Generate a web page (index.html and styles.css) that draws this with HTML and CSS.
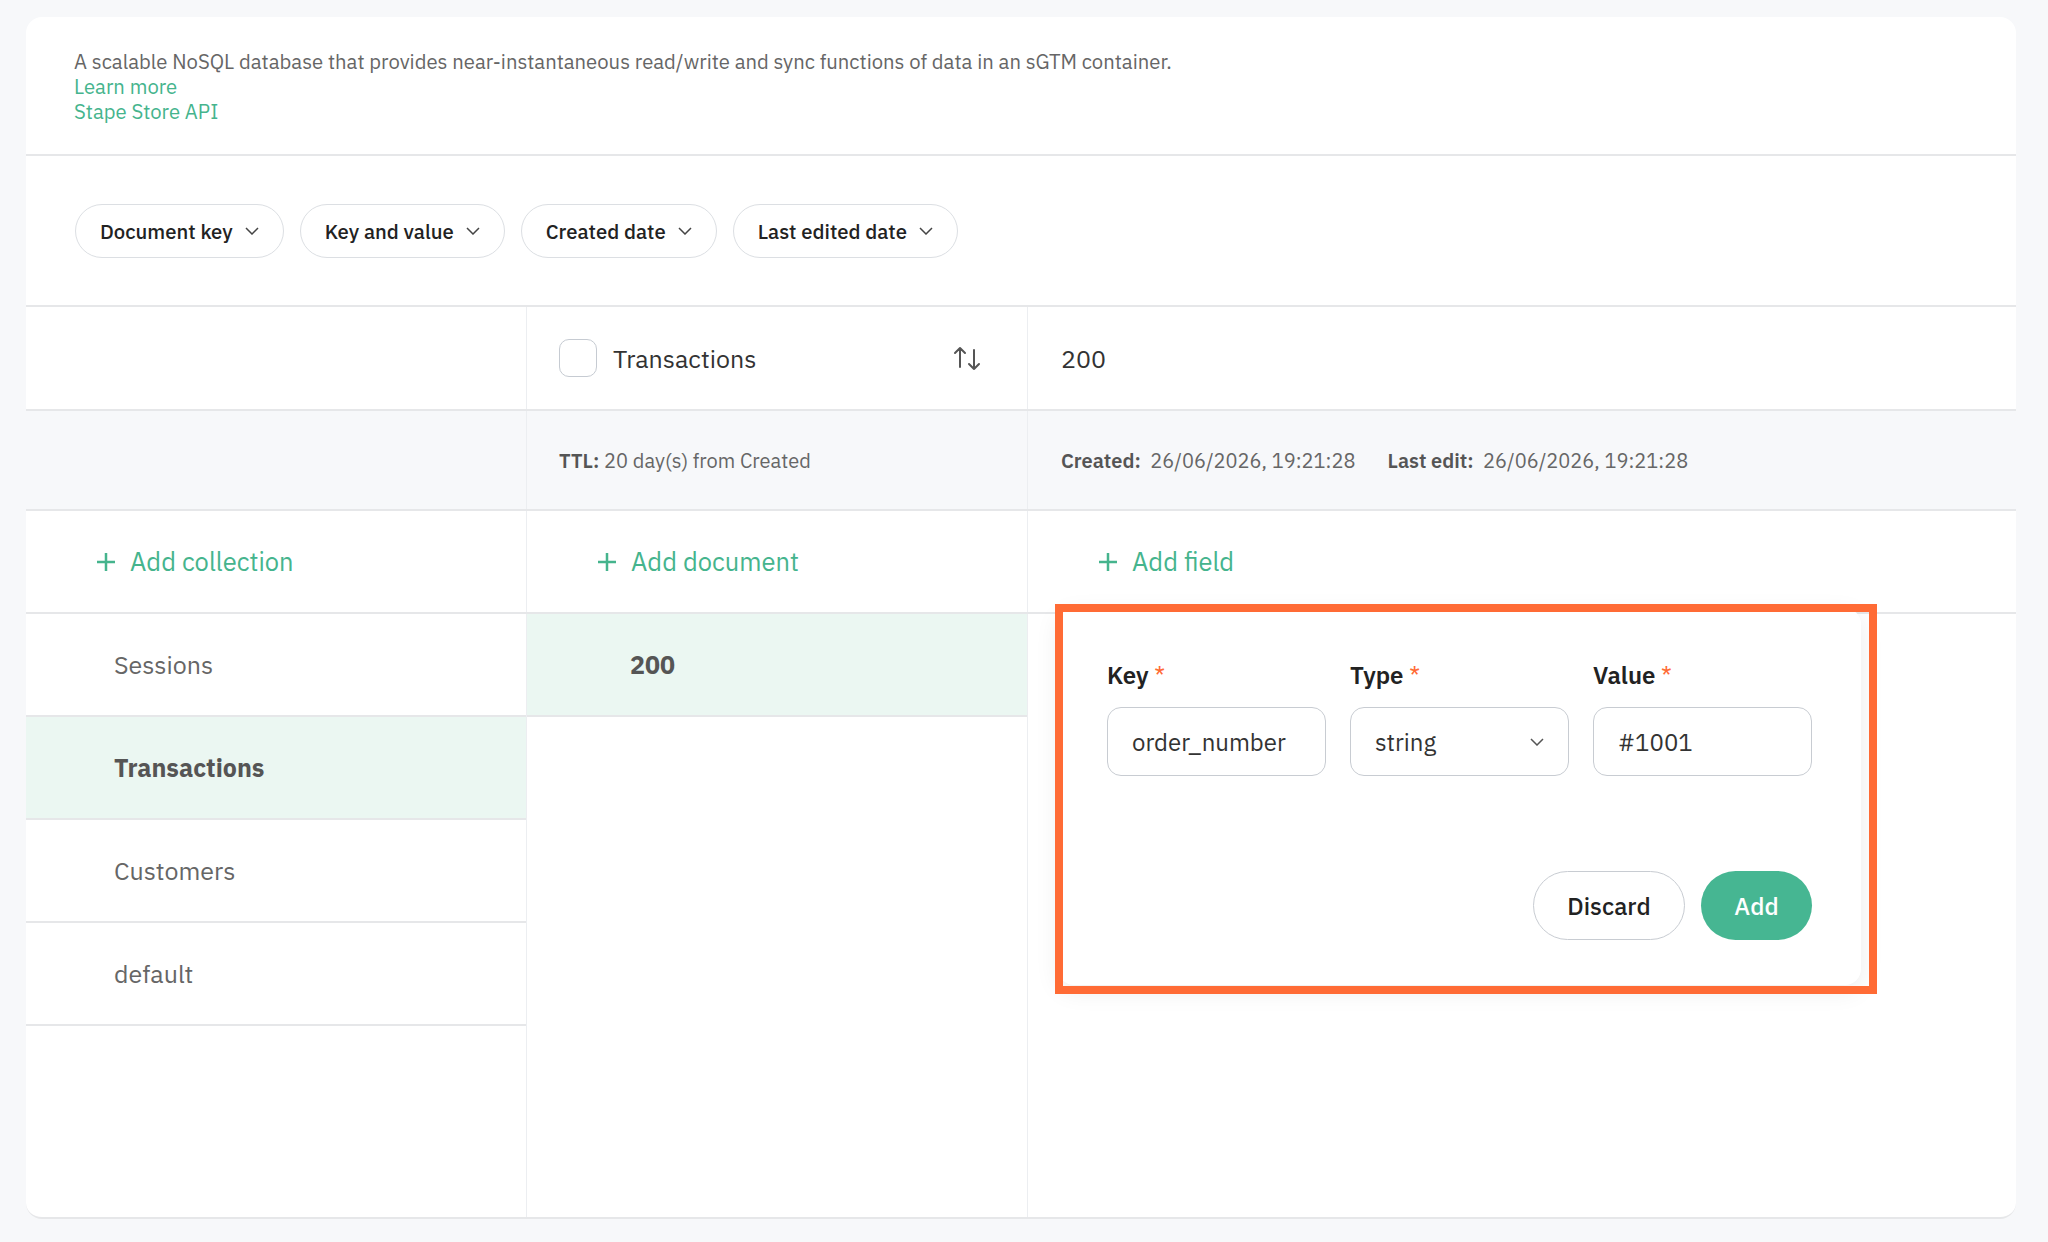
FILE: index.html
```html
<!DOCTYPE html>
<html lang="en">
<head>
<meta charset="utf-8">
<title>Stape Store</title>
<link rel="stylesheet" href="styles.css">
</head>
<body>
<div class="card">
  <section class="intro">
    <p class="desc">A scalable NoSQL database that provides near-instantaneous read/write and sync functions of data in an sGTM container.</p>
    <a class="link" href="#">Learn more</a>
    <a class="link" href="#">Stape Store API</a>
  </section>

  <section class="filters">
    <button class="pill">Document key <svg class="chev" viewBox="0 0 14 8"><polyline points="1,1 7,7 13,1"/></svg></button>
    <button class="pill">Key and value <svg class="chev" viewBox="0 0 14 8"><polyline points="1,1 7,7 13,1"/></svg></button>
    <button class="pill">Created date <svg class="chev" viewBox="0 0 14 8"><polyline points="1,1 7,7 13,1"/></svg></button>
    <button class="pill">Last edited date <svg class="chev" viewBox="0 0 14 8"><polyline points="1,1 7,7 13,1"/></svg></button>
  </section>

  <div class="row head">
    <div class="cell c1"></div>
    <div class="cell c2">
      <span class="checkbox"></span>
      <span class="head-title">Transactions</span>
      <svg class="sort" viewBox="0 0 28 26"><path d="M7 22V3M2 8l5-5 5 5M21 5v19M16 19l5 5 5-5"/></svg>
    </div>
    <div class="cell c3"><span class="head-title">200</span></div>
  </div>

  <div class="row meta">
    <div class="cell c1"></div>
    <div class="cell c2"><span class="meta-text"><b>TTL:</b> 20 day(s) from Created</span></div>
    <div class="cell c3">
      <span class="meta-text"><b>Created:</b>&nbsp; 26/06/2026, 19:21:28</span>
      <span class="meta-text"><b>Last edit:</b>&nbsp; 26/06/2026, 19:21:28</span>
    </div>
  </div>

  <div class="row add">
    <div class="cell c1"><span class="add-link"><svg class="plus" viewBox="0 0 20 20"><path d="M10 1v18M1 10h18"/></svg>Add collection</span></div>
    <div class="cell c2"><span class="add-link"><svg class="plus" viewBox="0 0 20 20"><path d="M10 1v18M1 10h18"/></svg>Add document</span></div>
    <div class="cell c3"><span class="add-link"><svg class="plus" viewBox="0 0 20 20"><path d="M10 1v18M1 10h18"/></svg>Add field</span></div>
  </div>

  <div class="body">
    <div class="col c1">
      <div class="item">Sessions</div>
      <div class="item selected">Transactions</div>
      <div class="item">Customers</div>
      <div class="item">default</div>
    </div>
    <div class="col c2">
      <div class="item doc selected">200</div>
    </div>
    <div class="col c3">
      <div class="popup">
        <div class="fields">
          <label class="flabel">Key <span class="req">*</span></label>
          <label class="flabel">Type <span class="req">*</span></label>
          <label class="flabel">Value <span class="req">*</span></label>
          <div class="input">order_number</div>
          <div class="input select">string <svg class="chev sel" viewBox="0 0 14 8"><polyline points="1,1 7,7 13,1"/></svg></div>
          <div class="input">#1001</div>
        </div>
        <div class="actions">
          <button class="btn discard">Discard</button>
          <button class="btn primary">Add</button>
        </div>
      </div>
      <div class="highlight"></div>
    </div>
  </div>
</div>
</body>
</html>
```

FILE: styles.css
```css
* { box-sizing: border-box; }

html, body {
  margin: 0;
  padding: 0;
  background: #f7f8fa;
  height: 1242px;
  overflow: hidden;
}

body {
  font-family: "IBM Plex Sans", "Open Sans", "Noto Sans", sans-serif;
  color: #333;
  padding: 17px 32px 23px 26px;
}

.card {
  height: 1202px;
  background: #fff;
  border-radius: 16px;
  border-bottom: 2px solid #e6e7e9;
  display: flex;
  flex-direction: column;
  overflow: visible;
}

.intro {
  padding: 32px 48px 30px;
  border-bottom: 2px solid #e6e7e9;
  display: flex;
  flex-direction: column;
  align-items: flex-start;
  font-size: 20.3px;
  line-height: 25px;
}

.desc {
  margin: 0;
  color: #666;
}

.link {
  color: #45b48d;
  text-decoration: none;
}

.filters {
  display: flex;
  gap: 16px;
  padding: 48px 49px 47px;
  border-bottom: 2px solid #e6e7e9;
}

.pill {
  height: 54px;
  display: flex;
  align-items: center;
  gap: 12px;
  padding: 0 24px;
  border: 1.5px solid #dcdfe3;
  border-radius: 27px;
  background: #fff;
  font-family: inherit;
  font-size: 20.3px;
  font-weight: 500;
  color: #222;
}

.chev {
  width: 14px;
  height: 8px;
  fill: none;
  stroke: #444;
  stroke-width: 1.5;
}

.row {
  display: flex;
  border-bottom: 2px solid #e6e7e9;
}

.cell {
  display: flex;
  align-items: center;
}

.c1 { width: 500px; flex: none; }
.c2 { width: 501px; flex: none; border-left: 1px solid #eceef1; }
.c3 { flex: 1; border-left: 1px solid #eceef1; }

.head { height: 104px; }
.head .c2 { padding: 0 46px 0 32px; }
.head .c3 { padding-left: 33px; }

.checkbox {
  width: 38px;
  height: 38px;
  border: 1.5px solid #c6cbd2;
  border-radius: 10px;
  margin-right: 16px;
  flex: none;
}

.head-title {
  font-size: 25px;
  color: #333;
}

.sort {
  width: 28px;
  height: 26px;
  margin-left: auto;
  fill: none;
  stroke: #555;
  stroke-width: 2;
  stroke-linecap: round;
  stroke-linejoin: round;
}

.meta {
  height: 100px;
  background: #f7f8fa;
}
.meta .c2 { padding-left: 32px; }
.meta .c3 { padding-left: 33px; gap: 32px; }

.meta-text {
  font-size: 20px;
  color: #666;
}
.meta-text b {
  font-weight: 600;
  color: #555;
}

.add { height: 103px; }
.add .cell { padding-left: 70px; }

.add-link {
  display: flex;
  align-items: center;
  gap: 14px;
  color: #45b48d;
  font-size: 25.5px;
}

.plus {
  width: 20px;
  height: 20px;
  fill: none;
  stroke: #45b48d;
  stroke-width: 2.5;
}

.body {
  flex: 1;
  display: flex;
}

.col { position: relative; }
.body .c1 { border-left: none; }

.item {
  height: 103px;
  display: flex;
  align-items: center;
  padding-left: 88px;
  border-bottom: 2px solid #e6e7e9;
  font-size: 25px;
  color: #666;
}

.item.selected {
  background: #ebf7f2;
  font-weight: 700;
  color: #555;
}

.item.doc { padding-left: 103px; }

.popup {
  position: absolute;
  left: 30px;
  top: -6px;
  width: 803px;
  height: 377px;
  background: #fff;
  border-radius: 16px;
  box-shadow: 0 6px 24px rgba(0, 0, 0, 0.08);
  padding: 51px 49px 0;
  display: flex;
  flex-direction: column;
}

.fields {
  display: grid;
  grid-template-columns: repeat(3, 219px);
  column-gap: 24px;
  row-gap: 16px;
}

.flabel {
  font-size: 24px;
  line-height: 32px;
  font-weight: 600;
  color: #222;
}

.req { color: #ff6b35; font-weight: 400; }

.input {
  height: 69px;
  border: 1.5px solid #c8ccd2;
  border-radius: 14px;
  padding: 0 0 0 24px;
  display: flex;
  align-items: center;
  font-size: 24px;
  color: #333;
  white-space: nowrap;
  overflow: hidden;
}

.input.select { padding-right: 24px; justify-content: space-between; }
.chev.sel { stroke: #555; }

.actions {
  margin-top: 95px;
  display: flex;
  justify-content: flex-end;
  gap: 16px;
}

.btn {
  height: 69px;
  border-radius: 35px;
  font-family: inherit;
  font-size: 24px;
  font-weight: 500;
  padding: 0 24px;
}

.btn.discard {
  width: 152px;
  background: #fff;
  border: 1.5px solid #c8ccd2;
  color: #222;
}

.btn.primary {
  width: 111px;
  background: #46b692;
  border: none;
  color: #fff;
}

.highlight {
  position: absolute;
  left: 27px;
  top: -10px;
  width: 822px;
  height: 390px;
  border: 8px solid #ff6b35;
  pointer-events: none;
}
```
